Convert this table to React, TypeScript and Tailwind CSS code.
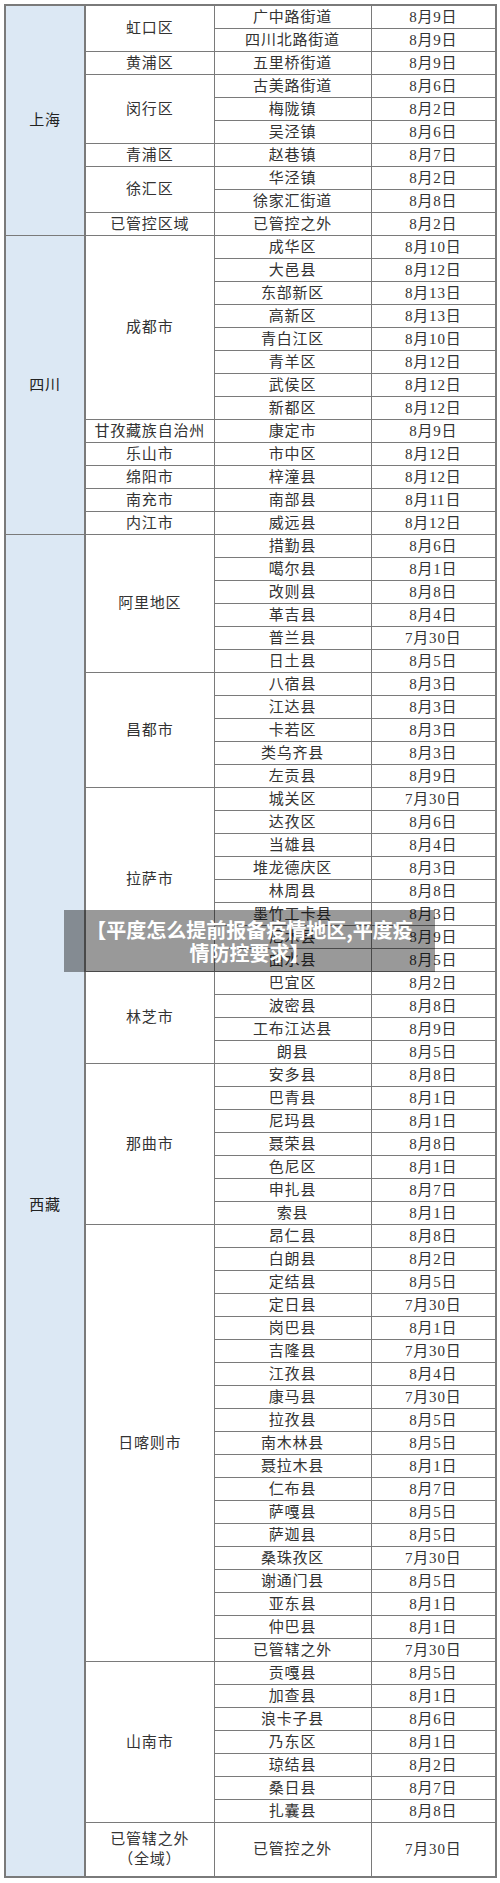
import React from "react"

type Group = { name: React.ReactNode; rows: [string, string][]; tall?: boolean }
type Province = { name: string; groups: Group[] }

const data: Province[] = [
  {
    name: "上海",
    groups: [
      { name: "虹口区", rows: [["广中路街道", "8月9日"], ["四川北路街道", "8月9日"]] },
      { name: "黄浦区", rows: [["五里桥街道", "8月9日"]] },
      { name: "闵行区", rows: [["古美路街道", "8月6日"], ["梅陇镇", "8月2日"], ["吴泾镇", "8月6日"]] },
      { name: "青浦区", rows: [["赵巷镇", "8月7日"]] },
      { name: "徐汇区", rows: [["华泾镇", "8月2日"], ["徐家汇街道", "8月8日"]] },
      { name: "已管控区域", rows: [["已管控之外", "8月2日"]] },
    ],
  },
  {
    name: "四川",
    groups: [
      {
        name: "成都市",
        rows: [
          ["成华区", "8月10日"],
          ["大邑县", "8月12日"],
          ["东部新区", "8月13日"],
          ["高新区", "8月13日"],
          ["青白江区", "8月10日"],
          ["青羊区", "8月12日"],
          ["武侯区", "8月12日"],
          ["新都区", "8月12日"],
        ],
      },
      { name: "甘孜藏族自治州", rows: [["康定市", "8月9日"]] },
      { name: "乐山市", rows: [["市中区", "8月12日"]] },
      { name: "绵阳市", rows: [["梓潼县", "8月12日"]] },
      { name: "南充市", rows: [["南部县", "8月11日"]] },
      { name: "内江市", rows: [["威远县", "8月12日"]] },
    ],
  },
  {
    name: "西藏",
    groups: [
      {
        name: "阿里地区",
        rows: [
          ["措勤县", "8月6日"],
          ["噶尔县", "8月1日"],
          ["改则县", "8月8日"],
          ["革吉县", "8月4日"],
          ["普兰县", "7月30日"],
          ["日土县", "8月5日"],
        ],
      },
      {
        name: "昌都市",
        rows: [
          ["八宿县", "8月3日"],
          ["江达县", "8月3日"],
          ["卡若区", "8月3日"],
          ["类乌齐县", "8月3日"],
          ["左贡县", "8月9日"],
        ],
      },
      {
        name: "拉萨市",
        rows: [
          ["城关区", "7月30日"],
          ["达孜区", "8月6日"],
          ["当雄县", "8月4日"],
          ["堆龙德庆区", "8月3日"],
          ["林周县", "8月8日"],
          ["墨竹工卡县", "8月3日"],
          ["尼木县", "8月9日"],
          ["曲水县", "8月5日"],
        ],
      },
      {
        name: "林芝市",
        rows: [
          ["巴宜区", "8月2日"],
          ["波密县", "8月8日"],
          ["工布江达县", "8月9日"],
          ["朗县", "8月5日"],
        ],
      },
      {
        name: "那曲市",
        rows: [
          ["安多县", "8月8日"],
          ["巴青县", "8月1日"],
          ["尼玛县", "8月1日"],
          ["聂荣县", "8月8日"],
          ["色尼区", "8月1日"],
          ["申扎县", "8月7日"],
          ["索县", "8月1日"],
        ],
      },
      {
        name: "日喀则市",
        rows: [
          ["昂仁县", "8月8日"],
          ["白朗县", "8月2日"],
          ["定结县", "8月5日"],
          ["定日县", "7月30日"],
          ["岗巴县", "8月1日"],
          ["吉隆县", "7月30日"],
          ["江孜县", "8月4日"],
          ["康马县", "7月30日"],
          ["拉孜县", "8月5日"],
          ["南木林县", "8月5日"],
          ["聂拉木县", "8月1日"],
          ["仁布县", "8月7日"],
          ["萨嘎县", "8月5日"],
          ["萨迦县", "8月5日"],
          ["桑珠孜区", "7月30日"],
          ["谢通门县", "8月5日"],
          ["亚东县", "8月1日"],
          ["仲巴县", "8月1日"],
          ["已管辖之外", "7月30日"],
        ],
      },
      {
        name: "山南市",
        rows: [
          ["贡嘎县", "8月5日"],
          ["加查县", "8月1日"],
          ["浪卡子县", "8月6日"],
          ["乃东区", "8月1日"],
          ["琼结县", "8月2日"],
          ["桑日县", "8月7日"],
          ["扎囊县", "8月8日"],
        ],
      },
      {
        name: (
          <>
            已管辖之外
            <br />
            （全域）
          </>
        ),
        rows: [["已管控之外", "7月30日"]],
        tall: true,
      },
    ],
  },
]

const cell = "border border-[#7a7a7a] text-center align-middle p-0 whitespace-nowrap"

export default function App() {
  const trs: React.ReactNode[] = []
  data.forEach((prov, pi) => {
    const total = prov.groups.reduce((n, g) => n + g.rows.length, 0)
    prov.groups.forEach((g, gi) => {
      g.rows.forEach((r, ri) => {
        trs.push(
          <tr key={`${pi}-${gi}-${ri}`} className={g.tall ? "h-[55px]" : "h-[23px]"}>
            {gi === 0 && ri === 0 && (
              <td rowSpan={total} className={`${cell} bg-[#dce8f4] text-[#222] border-r-2 border-l-2`}>
                {prov.name}
              </td>
            )}
            {ri === 0 && (
              <td rowSpan={g.rows.length} className={`${cell} ${g.tall ? "leading-[20px]" : ""}`}>
                {g.name}
              </td>
            )}
            <td className={cell}>{r[0]}</td>
            <td className={`${cell} border-r-2`}>{r[1]}</td>
          </tr>
        )
      })
    })
  })

  return (
    <div className="relative w-[500px] h-[1883px] bg-white">
      <div className="pt-[4px] pl-[4px]">
        <table
          className="border-collapse table-fixed w-[491px] text-[15px] leading-[20px] tracking-[0.8px] text-[#333] border-t-2 border-b-2 border-[#7a7a7a]"
          style={{ fontFamily: '"Liberation Serif", "Noto Sans CJK SC", serif' }}
        >
          <colgroup>
            <col className="w-[80px]" />
            <col className="w-[129px]" />
            <col className="w-[157px]" />
            <col className="w-[125px]" />
          </colgroup>
          <tbody>{trs}</tbody>
        </table>
      </div>
      <div
        className="absolute left-[64px] top-[910px] w-[371px] h-[62px] bg-black/40 px-[14px] py-[8px] text-center text-white font-bold text-[20px] leading-[23px]"
        style={{ fontFamily: '"Noto Sans CJK SC", "Noto Sans", sans-serif' }}
      >
        【平度怎么提前报备疫情地区,平度疫情防控要求】
      </div>
    </div>
  )
}
